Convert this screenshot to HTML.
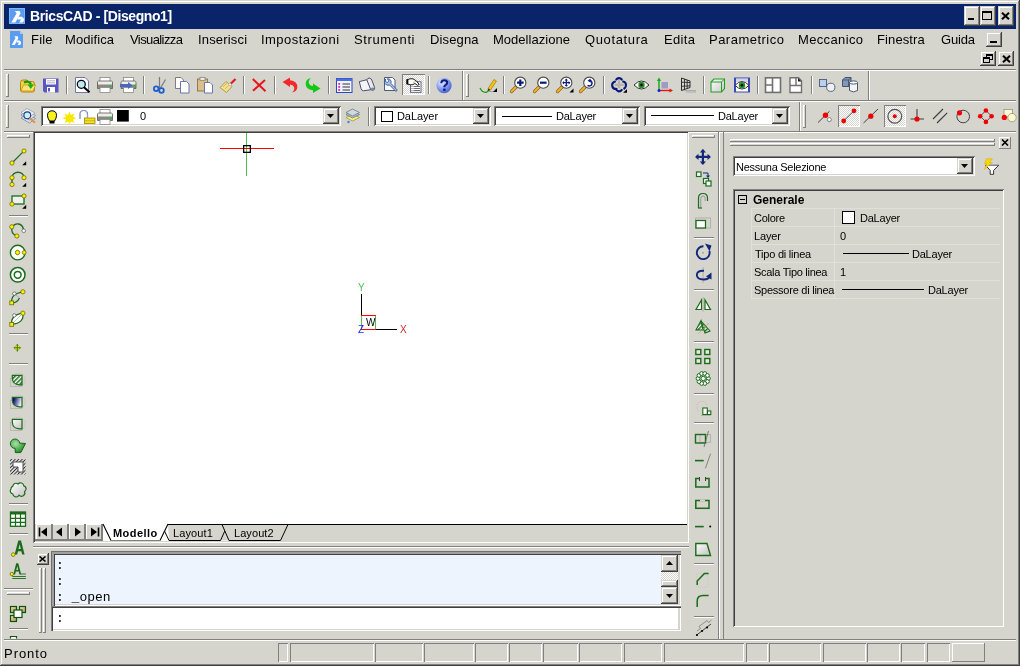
<!DOCTYPE html><html><head><meta charset="utf-8"><style>
html,body{margin:0;padding:0}
body{width:1020px;height:666px;position:relative;overflow:hidden;background:#D5D5CD;font-family:"Liberation Sans",sans-serif}
body>div,body>svg{position:absolute}
</style></head><body>
<div style="left:1px;top:1px;width:1018px;height:1px;background:#FFFFFF"></div>
<div style="left:1px;top:1px;width:1px;height:664px;background:#FFFFFF"></div>
<div style="left:1018px;top:1px;width:1px;height:664px;background:#808080"></div>
<div style="left:1019px;top:0px;width:1px;height:666px;background:#404040"></div>
<div style="left:1px;top:664px;width:1018px;height:1px;background:#808080"></div>
<div style="left:0px;top:665px;width:1020px;height:1px;background:#404040"></div>
<div style="left:4px;top:4px;width:1012px;height:25px;background:#0A246A"></div>
<svg style="left:9px;top:8px;" width="16" height="16" viewBox="0 0 16 16"><rect width="16" height="16" fill="#5A9CF0"/><rect x="0.5" y="0.5" width="15" height="15" fill="none" stroke="#7DB6FA"/><path d="M5.9 3H10.6L11.6 5.2L6.4 14.6H2.3L7.6 5.3Z" fill="#fff"/><path d="M9.5 8.7H13L14.9 10.8V12.9L13.6 14.6H10.2L12.1 11.5H8.4Z" fill="#fff"/></svg>
<div style="left:29.59px;top:8.95px;font:bold 14px/14px 'Liberation Sans';color:#fff;white-space:pre;will-change:transform;letter-spacing:-0.398px;">BricsCAD - [Disegno1]</div>
<div style="left:964px;top:6px;width:16px;height:20px;background:#D5D5CD;box-shadow:inset -1px -1px #404040,inset 1px 1px #D5D5CD,inset -2px -2px #808080,inset 2px 2px #FFFFFF;"></div>
<div style="left:980px;top:6px;width:16px;height:20px;background:#D5D5CD;box-shadow:inset -1px -1px #404040,inset 1px 1px #D5D5CD,inset -2px -2px #808080,inset 2px 2px #FFFFFF;"></div>
<div style="left:998px;top:6px;width:16px;height:20px;background:#D5D5CD;box-shadow:inset -1px -1px #404040,inset 1px 1px #D5D5CD,inset -2px -2px #808080,inset 2px 2px #FFFFFF;"></div>
<div style="left:968px;top:18px;width:6px;height:2px;background:#000"></div>
<div style="left:982px;top:11px;width:10px;height:9px;border:1px solid #000;border-top-width:2px;box-sizing:border-box"></div>
<svg style="left:1001px;top:12px;" width="9" height="8" viewBox="0 0 9 8"><path d="M1 0.8L8 7.2M8 0.8L1 7.2" stroke="#000" stroke-width="2.1"/></svg>
<svg style="left:10px;top:31px;" width="14" height="17" viewBox="0 0 14 17"><path d="M0 0H10L13 3V17H0Z" fill="#5A9CF0"/><path d="M10 0V3H13" fill="#A8CCF8"/><path d="M4.4 5.3H7.7L8.4 6.9L4.7 14H1.8L5.5 7Z" fill="#fff"/><path d="M7.1 9.4H9.6L11 10.9V12.6L10.1 14H7.6L9 11.6H6.4Z" fill="#fff"/></svg>
<div style="left:30.96px;top:32.80px;font:normal 13px/13px 'Liberation Sans';color:#000;white-space:pre;will-change:transform;letter-spacing:0.21px;">File</div>
<div style="left:64.55999999999999px;top:32.80px;font:normal 13px/13px 'Liberation Sans';color:#000;white-space:pre;will-change:transform;letter-spacing:0.079px;">Modifica</div>
<div style="left:130.0px;top:32.80px;font:normal 13px/13px 'Liberation Sans';color:#000;white-space:pre;will-change:transform;letter-spacing:-0.597px;">Visualizza</div>
<div style="left:198.23000000000002px;top:32.80px;font:normal 13px/13px 'Liberation Sans';color:#000;white-space:pre;will-change:transform;letter-spacing:0.171px;">Inserisci</div>
<div style="left:261.33px;top:32.80px;font:normal 13px/13px 'Liberation Sans';color:#000;white-space:pre;will-change:transform;letter-spacing:0.462px;">Impostazioni</div>
<div style="left:354.415px;top:32.80px;font:normal 13px/13px 'Liberation Sans';color:#000;white-space:pre;will-change:transform;letter-spacing:0.607px;">Strumenti</div>
<div style="left:429.65999999999997px;top:32.80px;font:normal 13px/13px 'Liberation Sans';color:#000;white-space:pre;will-change:transform;letter-spacing:0.144px;">Disegna</div>
<div style="left:492.96px;top:32.80px;font:normal 13px/13px 'Liberation Sans';color:#000;white-space:pre;will-change:transform;letter-spacing:0.026px;">Modellazione</div>
<div style="left:585.415px;top:32.80px;font:normal 13px/13px 'Liberation Sans';color:#000;white-space:pre;will-change:transform;letter-spacing:0.629px;">Quotatura</div>
<div style="left:663.96px;top:32.80px;font:normal 13px/13px 'Liberation Sans';color:#000;white-space:pre;will-change:transform;letter-spacing:0.334px;">Edita</div>
<div style="left:708.96px;top:32.80px;font:normal 13px/13px 'Liberation Sans';color:#000;white-space:pre;will-change:transform;letter-spacing:0.479px;">Parametrico</div>
<div style="left:798.26px;top:32.80px;font:normal 13px/13px 'Liberation Sans';color:#000;white-space:pre;will-change:transform;letter-spacing:0.353px;">Meccanico</div>
<div style="left:877.26px;top:32.80px;font:normal 13px/13px 'Liberation Sans';color:#000;white-space:pre;will-change:transform;letter-spacing:0.106px;">Finestra</div>
<div style="left:941.0500000000001px;top:32.80px;font:normal 13px/13px 'Liberation Sans';color:#000;white-space:pre;will-change:transform;letter-spacing:-0.19px;">Guida</div>
<div style="left:986px;top:32px;width:16px;height:15px;background:#D5D5CD;box-shadow:inset -1px -1px #404040,inset 1px 1px #D5D5CD,inset -2px -2px #808080,inset 2px 2px #FFFFFF;"></div>
<div style="left:990px;top:41px;width:7px;height:2px;background:#000"></div>
<div style="left:980px;top:51px;width:16px;height:15px;background:#D5D5CD;box-shadow:inset -1px -1px #404040,inset 1px 1px #D5D5CD,inset -2px -2px #808080,inset 2px 2px #FFFFFF;"></div>
<div style="left:998px;top:51px;width:16px;height:15px;background:#D5D5CD;box-shadow:inset -1px -1px #404040,inset 1px 1px #D5D5CD,inset -2px -2px #808080,inset 2px 2px #FFFFFF;"></div>
<svg style="left:983px;top:54px;" width="10" height="9" viewBox="0 0 10 9"><rect x="3.5" y="0.5" width="6" height="5" fill="none" stroke="#000"/><rect x="3" y="0" width="7" height="2" fill="#000"/><rect x="0.5" y="3.5" width="6" height="5" fill="#D5D5CD" stroke="#000"/><rect x="0" y="3" width="7" height="2" fill="#000"/></svg>
<svg style="left:1002px;top:55px;" width="9" height="8" viewBox="0 0 9 8"><path d="M1 0.8L8 7.2M8 0.8L1 7.2" stroke="#000" stroke-width="2.1"/></svg>
<div style="left:4px;top:69px;width:1012px;height:1px;background:#808080"></div>
<div style="left:4px;top:70px;width:1012px;height:1px;background:#FFFFFF"></div>
<div style="left:4px;top:100px;width:1012px;height:1px;background:#808080"></div>
<div style="left:4px;top:101px;width:1012px;height:1px;background:#FFFFFF"></div>
<div style="left:4px;top:131px;width:1012px;height:1px;background:#808080"></div>
<div style="left:4px;top:132px;width:1012px;height:1px;background:#FFFFFF"></div>
<div style="left:6px;top:74px;width:3px;height:23px;box-shadow:inset -1px -1px #808080,inset 1px 1px #FFFFFF"></div>
<div style="left:66px;top:76px;width:1px;height:18px;background:#808080"></div>
<div style="left:67px;top:76px;width:1px;height:18px;background:#FFFFFF"></div>
<div style="left:143px;top:76px;width:1px;height:18px;background:#808080"></div>
<div style="left:144px;top:76px;width:1px;height:18px;background:#FFFFFF"></div>
<div style="left:243px;top:76px;width:1px;height:18px;background:#808080"></div>
<div style="left:244px;top:76px;width:1px;height:18px;background:#FFFFFF"></div>
<div style="left:274px;top:76px;width:1px;height:18px;background:#808080"></div>
<div style="left:275px;top:76px;width:1px;height:18px;background:#FFFFFF"></div>
<div style="left:328px;top:76px;width:1px;height:18px;background:#808080"></div>
<div style="left:329px;top:76px;width:1px;height:18px;background:#FFFFFF"></div>
<div style="left:428px;top:76px;width:1px;height:18px;background:#808080"></div>
<div style="left:429px;top:76px;width:1px;height:18px;background:#FFFFFF"></div>
<div style="left:462px;top:71px;width:1px;height:29px;background:#808080"></div>
<div style="left:463px;top:71px;width:1px;height:29px;background:#FFFFFF"></div>
<div style="left:466px;top:74px;width:3px;height:23px;box-shadow:inset -1px -1px #808080,inset 1px 1px #FFFFFF"></div>
<div style="left:503px;top:76px;width:1px;height:18px;background:#808080"></div>
<div style="left:504px;top:76px;width:1px;height:18px;background:#FFFFFF"></div>
<div style="left:603px;top:76px;width:1px;height:18px;background:#808080"></div>
<div style="left:604px;top:76px;width:1px;height:18px;background:#FFFFFF"></div>
<div style="left:703px;top:76px;width:1px;height:18px;background:#808080"></div>
<div style="left:704px;top:76px;width:1px;height:18px;background:#FFFFFF"></div>
<div style="left:757px;top:76px;width:1px;height:18px;background:#808080"></div>
<div style="left:758px;top:76px;width:1px;height:18px;background:#FFFFFF"></div>
<div style="left:811px;top:76px;width:1px;height:18px;background:#808080"></div>
<div style="left:812px;top:76px;width:1px;height:18px;background:#FFFFFF"></div>
<div style="left:868px;top:71px;width:1px;height:29px;background:#808080"></div>
<div style="left:869px;top:71px;width:1px;height:29px;background:#FFFFFF"></div>
<div style="left:6px;top:105px;width:3px;height:23px;box-shadow:inset -1px -1px #808080,inset 1px 1px #FFFFFF"></div>
<div style="left:368px;top:107px;width:1px;height:19px;background:#808080"></div>
<div style="left:369px;top:107px;width:1px;height:19px;background:#FFFFFF"></div>
<div style="left:799px;top:102px;width:1px;height:29px;background:#808080"></div>
<div style="left:800px;top:102px;width:1px;height:29px;background:#FFFFFF"></div>
<div style="left:803px;top:105px;width:3px;height:23px;box-shadow:inset -1px -1px #808080,inset 1px 1px #FFFFFF"></div>
<div style="left:41px;top:106px;width:300px;height:20px;background:#fff;box-shadow:inset 1px 1px #808080,inset -1px -1px #FFFFFF,inset 2px 2px #404040,inset -2px -2px #D5D5CD;"></div>
<div style="left:323px;top:108px;width:16px;height:16px;background:#D5D5CD;box-shadow:inset -1px -1px #404040,inset 1px 1px #D5D5CD,inset -2px -2px #808080,inset 2px 2px #FFFFFF;"></div>
<svg style="left:327px;top:114px;" width="7" height="4" viewBox="0 0 7 4"><path d="M0 0H7L3.5 4Z" fill="#000"/></svg>
<div style="left:374px;top:106px;width:117px;height:20px;background:#fff;box-shadow:inset 1px 1px #808080,inset -1px -1px #FFFFFF,inset 2px 2px #404040,inset -2px -2px #D5D5CD;"></div>
<div style="left:473px;top:108px;width:16px;height:16px;background:#D5D5CD;box-shadow:inset -1px -1px #404040,inset 1px 1px #D5D5CD,inset -2px -2px #808080,inset 2px 2px #FFFFFF;"></div>
<svg style="left:477px;top:114px;" width="7" height="4" viewBox="0 0 7 4"><path d="M0 0H7L3.5 4Z" fill="#000"/></svg>
<div style="left:494px;top:106px;width:146px;height:20px;background:#fff;box-shadow:inset 1px 1px #808080,inset -1px -1px #FFFFFF,inset 2px 2px #404040,inset -2px -2px #D5D5CD;"></div>
<div style="left:622px;top:108px;width:16px;height:16px;background:#D5D5CD;box-shadow:inset -1px -1px #404040,inset 1px 1px #D5D5CD,inset -2px -2px #808080,inset 2px 2px #FFFFFF;"></div>
<svg style="left:626px;top:114px;" width="7" height="4" viewBox="0 0 7 4"><path d="M0 0H7L3.5 4Z" fill="#000"/></svg>
<div style="left:644px;top:106px;width:146px;height:20px;background:#fff;box-shadow:inset 1px 1px #808080,inset -1px -1px #FFFFFF,inset 2px 2px #404040,inset -2px -2px #D5D5CD;"></div>
<div style="left:772px;top:108px;width:16px;height:16px;background:#D5D5CD;box-shadow:inset -1px -1px #404040,inset 1px 1px #D5D5CD,inset -2px -2px #808080,inset 2px 2px #FFFFFF;"></div>
<svg style="left:776px;top:114px;" width="7" height="4" viewBox="0 0 7 4"><path d="M0 0H7L3.5 4Z" fill="#000"/></svg>
<div style="left:139.615px;top:111.19px;font:normal 11px/11px 'Liberation Sans';color:#000;white-space:pre;will-change:transform;">0</div>
<div style="left:381px;top:111px;width:12px;height:11px;border:1px solid #000;box-sizing:border-box;background:#fff"></div>
<div style="left:397.12px;top:111.19px;font:normal 11px/11px 'Liberation Sans';color:#000;white-space:pre;will-change:transform;letter-spacing:-0.089px;">DaLayer</div>
<div style="left:502px;top:116px;width:50px;height:1px;background:#000"></div>
<div style="left:555.82px;top:111.19px;font:normal 11px/11px 'Liberation Sans';color:#000;white-space:pre;will-change:transform;letter-spacing:-0.222px;">DaLayer</div>
<div style="left:651px;top:115px;width:63px;height:1px;background:#000"></div>
<div style="left:717.52px;top:111.19px;font:normal 11px/11px 'Liberation Sans';color:#000;white-space:pre;will-change:transform;letter-spacing:-0.222px;">DaLayer</div>
<div style="left:402px;top:74px;width:23px;height:21px;background-color:#fff;background-image:linear-gradient(45deg,#D5D5CD 25%,transparent 25%,transparent 75%,#D5D5CD 75%),linear-gradient(45deg,#D5D5CD 25%,transparent 25%,transparent 75%,#D5D5CD 75%);background-size:2px 2px;background-position:0 0,1px 1px;box-shadow:inset 1px 1px #808080,inset -1px -1px #FFFFFF"></div>
<div style="left:838px;top:105px;width:22px;height:22px;background-color:#fff;background-image:linear-gradient(45deg,#D5D5CD 25%,transparent 25%,transparent 75%,#D5D5CD 75%),linear-gradient(45deg,#D5D5CD 25%,transparent 25%,transparent 75%,#D5D5CD 75%);background-size:2px 2px;background-position:0 0,1px 1px;box-shadow:inset 1px 1px #808080,inset -1px -1px #FFFFFF"></div>
<div style="left:884px;top:105px;width:22px;height:22px;background-color:#fff;background-image:linear-gradient(45deg,#D5D5CD 25%,transparent 25%,transparent 75%,#D5D5CD 75%),linear-gradient(45deg,#D5D5CD 25%,transparent 25%,transparent 75%,#D5D5CD 75%);background-size:2px 2px;background-position:0 0,1px 1px;box-shadow:inset 1px 1px #808080,inset -1px -1px #FFFFFF"></div>
<div style="left:4px;top:132px;width:29px;height:1px;background:#FFFFFF"></div>
<div style="left:7px;top:135px;width:23px;height:3px;box-shadow:inset -1px -1px #808080,inset 1px 1px #FFFFFF"></div>
<div style="left:9px;top:215px;width:19px;height:1px;background:#808080"></div>
<div style="left:9px;top:216px;width:19px;height:1px;background:#FFFFFF"></div>
<div style="left:9px;top:333px;width:19px;height:1px;background:#808080"></div>
<div style="left:9px;top:334px;width:19px;height:1px;background:#FFFFFF"></div>
<div style="left:9px;top:363px;width:19px;height:1px;background:#808080"></div>
<div style="left:9px;top:364px;width:19px;height:1px;background:#FFFFFF"></div>
<div style="left:9px;top:503px;width:19px;height:1px;background:#808080"></div>
<div style="left:9px;top:504px;width:19px;height:1px;background:#FFFFFF"></div>
<div style="left:9px;top:533px;width:19px;height:1px;background:#808080"></div>
<div style="left:9px;top:534px;width:19px;height:1px;background:#FFFFFF"></div>
<div style="left:4px;top:588px;width:29px;height:1px;background:#808080"></div>
<div style="left:4px;top:589px;width:29px;height:1px;background:#FFFFFF"></div>
<div style="left:7px;top:592px;width:23px;height:3px;box-shadow:inset -1px -1px #808080,inset 1px 1px #FFFFFF"></div>
<div style="left:9px;top:628px;width:19px;height:1px;background:#808080"></div>
<div style="left:9px;top:629px;width:19px;height:1px;background:#FFFFFF"></div>
<div style="left:33px;top:131px;width:656px;height:412px;background:#fff;box-shadow:inset 1px 1px #808080,inset -1px -1px #FFFFFF,inset 2px 2px #404040,inset -2px -2px #D5D5CD"></div>
<div style="left:246px;top:133px;width:1px;height:43px;background:#4CC24C"></div>
<div style="left:220px;top:148px;width:54px;height:1px;background:#FF0000"></div>
<svg style="left:240px;top:142px;" width="14" height="14" viewBox="0 0 14 14"><rect x="3.65" y="3.65" width="6.7" height="6.7" fill="none" stroke="#000" stroke-width="1.3"/></svg>
<div style="left:361px;top:294px;width:1px;height:22px;background:#000"></div>
<div style="left:361px;top:315px;width:15px;height:1px;background:#FF0000"></div>
<div style="left:361px;top:316px;width:1px;height:13px;background:#4CC24C"></div>
<div style="left:375px;top:316px;width:1px;height:13px;background:#4CC24C"></div>
<div style="left:361px;top:329px;width:15px;height:1px;background:#FF0000"></div>
<div style="left:376px;top:329px;width:21px;height:1px;background:#000"></div>
<div style="left:357.5px;top:282.54px;font:normal 10px/10px 'Liberation Sans';color:#4CC24C;white-space:pre;will-change:transform;">Y</div>
<div style="left:365.5px;top:317.54px;font:normal 10px/10px 'Liberation Sans';color:#000;white-space:pre;will-change:transform;">W</div>
<div style="left:357.5px;top:324.54px;font:normal 10px/10px 'Liberation Sans';color:#2020FF;white-space:pre;will-change:transform;">Z</div>
<div style="left:399.5px;top:324.54px;font:normal 10px/10px 'Liberation Sans';color:#C03030;white-space:pre;will-change:transform;">X</div>
<div style="left:35px;top:524px;width:68px;height:17px;background:#D5D5CD"></div>
<div style="left:36px;top:524px;width:15px;height:15px;background:#D5D5CD;box-shadow:inset 1px 1px #FFFFFF"></div>
<div style="left:52px;top:524px;width:15px;height:15px;background:#D5D5CD;box-shadow:inset 1px 1px #FFFFFF"></div>
<div style="left:69px;top:524px;width:15px;height:15px;background:#D5D5CD;box-shadow:inset 1px 1px #FFFFFF"></div>
<div style="left:86px;top:524px;width:15px;height:15px;background:#D5D5CD;box-shadow:inset 1px 1px #FFFFFF"></div>
<div style="left:51px;top:524px;width:2px;height:15px;background:#808080"></div>
<div style="left:67px;top:524px;width:2px;height:15px;background:#808080"></div>
<div style="left:84px;top:524px;width:2px;height:15px;background:#808080"></div>
<div style="left:101px;top:524px;width:2px;height:15px;background:#808080"></div>
<div style="left:35px;top:539px;width:68px;height:2px;background:#808080"></div>
<svg style="left:100px;top:524px;" width="190" height="18" viewBox="0 0 190 18"></svg>
<div style="left:33px;top:546px;width:656px;height:1px;background:#808080"></div>
<div style="left:33px;top:547px;width:656px;height:1px;background:#FFFFFF"></div>
<div style="left:37px;top:553px;width:12px;height:12px;background:#D5D5CD;box-shadow:inset -1px -1px #404040,inset 1px 1px #D5D5CD,inset -2px -2px #808080,inset 2px 2px #FFFFFF;"></div>
<svg style="left:39px;top:556px;" width="7" height="6" viewBox="0 0 7 6"><path d="M0.5 0.5L6.5 5.5M6.5 0.5L0.5 5.5" stroke="#000" stroke-width="1.6"/></svg>
<div style="left:39px;top:568px;width:3px;height:65px;box-shadow:inset -1px -1px #808080,inset 1px 1px #FFFFFF"></div>
<div style="left:43px;top:568px;width:3px;height:65px;box-shadow:inset -1px -1px #808080,inset 1px 1px #FFFFFF"></div>
<div style="left:51px;top:551px;width:630px;height:55px;background:#EDF4FE;box-shadow:inset 1px 1px #707070,inset 2px 2px #A0A0A0,inset 3px 3px #A0A0A0,inset 4px 4px #404040,inset -1px -1px #FFFFFF,inset -3px -2px #D5D5CD"></div>
<div style="left:51px;top:606px;width:630px;height:25px;background:#fff;box-shadow:inset 1px 1px #808080,inset 2px 2px #404040,inset -1px -1px #FFFFFF,inset -3px -2px #D5D5CD"></div>
<div style="left:55.5px;top:559.04px;font:normal 13px/13px 'Liberation Mono';color:#000;white-space:pre;will-change:transform;">: </div>
<div style="left:55.5px;top:575.04px;font:normal 13px/13px 'Liberation Mono';color:#000;white-space:pre;will-change:transform;">:</div>
<div style="left:55.5px;top:591.04px;font:normal 13px/13px 'Liberation Mono';color:#000;white-space:pre;will-change:transform;">: _open</div>
<div style="left:55.5px;top:612.04px;font:normal 13px/13px 'Liberation Mono';color:#000;white-space:pre;will-change:transform;">:</div>
<div style="left:661px;top:555px;width:17px;height:17px;background:#D5D5CD;box-shadow:inset -1px -1px #404040,inset 1px 1px #D5D5CD,inset -2px -2px #808080,inset 2px 2px #FFFFFF;"></div>
<svg style="left:666px;top:561px;" width="7" height="4" viewBox="0 0 7 4"><path d="M3.5 0L7 4H0Z" fill="#000"/></svg>
<div style="left:661px;top:572px;width:17px;height:8px;background-color:#fff;background-image:linear-gradient(45deg,#D5D5CD 25%,transparent 25%,transparent 75%,#D5D5CD 75%),linear-gradient(45deg,#D5D5CD 25%,transparent 25%,transparent 75%,#D5D5CD 75%);background-size:2px 2px;background-position:0 0,1px 1px"></div>
<div style="left:661px;top:580px;width:17px;height:7px;background:#D5D5CD;box-shadow:inset -1px -1px #404040,inset 1px 1px #D5D5CD,inset -2px -2px #808080,inset 2px 2px #FFFFFF;"></div>
<div style="left:661px;top:587px;width:17px;height:17px;background:#D5D5CD;box-shadow:inset -1px -1px #404040,inset 1px 1px #D5D5CD,inset -2px -2px #808080,inset 2px 2px #FFFFFF;"></div>
<svg style="left:666px;top:594px;" width="7" height="4" viewBox="0 0 7 4"><path d="M0 0H7L3.5 4Z" fill="#000"/></svg>
<div style="left:692px;top:135px;width:23px;height:3px;box-shadow:inset -1px -1px #808080,inset 1px 1px #FFFFFF"></div>
<div style="left:718px;top:132px;width:1px;height:507px;background:#808080"></div>
<div style="left:719px;top:132px;width:1px;height:507px;background:#FFFFFF"></div>
<div style="left:723px;top:132px;width:1px;height:507px;background:#808080"></div>
<div style="left:694px;top:237px;width:20px;height:1px;background:#808080"></div>
<div style="left:694px;top:238px;width:20px;height:1px;background:#FFFFFF"></div>
<div style="left:694px;top:289px;width:20px;height:1px;background:#808080"></div>
<div style="left:694px;top:290px;width:20px;height:1px;background:#FFFFFF"></div>
<div style="left:694px;top:341px;width:20px;height:1px;background:#808080"></div>
<div style="left:694px;top:342px;width:20px;height:1px;background:#FFFFFF"></div>
<div style="left:694px;top:393px;width:20px;height:1px;background:#808080"></div>
<div style="left:694px;top:394px;width:20px;height:1px;background:#FFFFFF"></div>
<div style="left:694px;top:422px;width:20px;height:1px;background:#808080"></div>
<div style="left:694px;top:423px;width:20px;height:1px;background:#FFFFFF"></div>
<div style="left:694px;top:563px;width:20px;height:1px;background:#808080"></div>
<div style="left:694px;top:564px;width:20px;height:1px;background:#FFFFFF"></div>
<div style="left:694px;top:616px;width:20px;height:1px;background:#808080"></div>
<div style="left:694px;top:617px;width:20px;height:1px;background:#FFFFFF"></div>
<div style="left:730px;top:139px;width:265px;height:3px;box-shadow:inset -1px -1px #808080,inset 1px 1px #FFFFFF"></div>
<div style="left:730px;top:143px;width:265px;height:3px;box-shadow:inset -1px -1px #808080,inset 1px 1px #FFFFFF"></div>
<div style="left:999px;top:137px;width:12px;height:12px;background:#D5D5CD;box-shadow:inset -1px -1px #808080,inset 1px 1px #FFFFFF;"></div>
<svg style="left:1001px;top:139px;" width="8" height="7" viewBox="0 0 8 7"><path d="M1 0.5L7 6.5M7 0.5L1 6.5" stroke="#000" stroke-width="1.6"/></svg>
<div style="left:733px;top:156px;width:242px;height:20px;background:#fff;box-shadow:inset 1px 1px #808080,inset -1px -1px #FFFFFF,inset 2px 2px #404040,inset -2px -2px #D5D5CD;"></div>
<div style="left:957px;top:158px;width:16px;height:16px;background:#D5D5CD;box-shadow:inset -1px -1px #404040,inset 1px 1px #D5D5CD,inset -2px -2px #808080,inset 2px 2px #FFFFFF;"></div>
<svg style="left:961px;top:164px;" width="7" height="4" viewBox="0 0 7 4"><path d="M0 0H7L3.5 4Z" fill="#000"/></svg>
<div style="left:735.52px;top:161.69px;font:normal 11px/11px 'Liberation Sans';color:#000;white-space:pre;will-change:transform;letter-spacing:-0.278px;">Nessuna Selezione</div>
<div style="left:733px;top:189px;width:271px;height:438px;box-shadow:inset 1px 1px #808080,inset -1px -1px #FFFFFF,inset 2px 2px #404040,inset -2px -2px #D5D5CD"></div>
<div style="left:738px;top:195px;width:9px;height:9px;border:1px solid #000;box-sizing:border-box"></div>
<div style="left:740px;top:199px;width:5px;height:1px;background:#000"></div>
<div style="left:752.92px;top:194.34px;font:bold 12px/12px 'Liberation Sans';color:#000;white-space:pre;will-change:transform;letter-spacing:-0.003px;">Generale</div>
<div style="left:751px;top:208px;width:249px;height:1px;background:#E0DFD8"></div>
<div style="left:751px;top:226px;width:249px;height:1px;background:#E0DFD8"></div>
<div style="left:751px;top:244px;width:249px;height:1px;background:#E0DFD8"></div>
<div style="left:751px;top:262px;width:249px;height:1px;background:#E0DFD8"></div>
<div style="left:751px;top:280px;width:249px;height:1px;background:#E0DFD8"></div>
<div style="left:751px;top:298px;width:249px;height:1px;background:#E0DFD8"></div>
<div style="left:751px;top:208px;width:1px;height:91px;background:#E0DFD8"></div>
<div style="left:834px;top:208px;width:1px;height:91px;background:#E0DFD8"></div>
<div style="left:754.35px;top:212.69px;font:normal 11px/11px 'Liberation Sans';color:#000;white-space:pre;will-change:transform;letter-spacing:-0.281px;">Colore</div>
<div style="left:754.02px;top:230.69px;font:normal 11px/11px 'Liberation Sans';color:#000;white-space:pre;will-change:transform;letter-spacing:-0.128px;">Layer</div>
<div style="left:754.68px;top:248.69px;font:normal 11px/11px 'Liberation Sans';color:#000;white-space:pre;will-change:transform;letter-spacing:-0.228px;">Tipo di linea</div>
<div style="left:754.405px;top:266.69px;font:normal 11px/11px 'Liberation Sans';color:#000;white-space:pre;will-change:transform;letter-spacing:-0.281px;">Scala Tipo linea</div>
<div style="left:754.405px;top:284.69px;font:normal 11px/11px 'Liberation Sans';color:#000;white-space:pre;will-change:transform;letter-spacing:-0.246px;">Spessore di linea</div>
<div style="left:842px;top:211px;width:13px;height:13px;border:1px solid #000;box-sizing:border-box;background:#fff"></div>
<div style="left:859.72px;top:212.69px;font:normal 11px/11px 'Liberation Sans';color:#000;white-space:pre;will-change:transform;letter-spacing:-0.222px;">DaLayer</div>
<div style="left:839.5px;top:230.69px;font:normal 11px/11px 'Liberation Sans';color:#000;white-space:pre;will-change:transform;">0</div>
<div style="left:843px;top:253px;width:66px;height:1px;background:#000"></div>
<div style="left:912.12px;top:248.69px;font:normal 11px/11px 'Liberation Sans';color:#000;white-space:pre;will-change:transform;letter-spacing:-0.222px;">DaLayer</div>
<div style="left:840px;top:266.69px;font:normal 11px/11px 'Liberation Sans';color:#000;white-space:pre;will-change:transform;">1</div>
<div style="left:842px;top:289px;width:82px;height:1px;background:#000"></div>
<div style="left:927.92px;top:284.69px;font:normal 11px/11px 'Liberation Sans';color:#000;white-space:pre;will-change:transform;letter-spacing:-0.222px;">DaLayer</div>
<div style="left:4px;top:639px;width:1012px;height:1px;background:#808080"></div>
<div style="left:4px;top:640px;width:1012px;height:1px;background:#FFFFFF"></div>
<div style="left:4.46px;top:646.60px;font:normal 13px/13px 'Liberation Sans';color:#000;white-space:pre;will-change:transform;letter-spacing:0.955px;">Pronto</div>
<div style="left:278px;top:643px;width:10px;height:19px;box-shadow:inset 1px 1px #808080,inset -1px -1px #FFFFFF;"></div>
<div style="left:290px;top:643px;width:84px;height:19px;box-shadow:inset 1px 1px #808080,inset -1px -1px #FFFFFF;"></div>
<div style="left:375px;top:643px;width:48px;height:19px;box-shadow:inset 1px 1px #808080,inset -1px -1px #FFFFFF;"></div>
<div style="left:424px;top:643px;width:50px;height:19px;box-shadow:inset 1px 1px #808080,inset -1px -1px #FFFFFF;"></div>
<div style="left:475px;top:643px;width:33px;height:19px;box-shadow:inset 1px 1px #808080,inset -1px -1px #FFFFFF;"></div>
<div style="left:509px;top:643px;width:33px;height:19px;box-shadow:inset 1px 1px #808080,inset -1px -1px #FFFFFF;"></div>
<div style="left:543px;top:643px;width:35px;height:19px;box-shadow:inset 1px 1px #808080,inset -1px -1px #FFFFFF;"></div>
<div style="left:579px;top:643px;width:43px;height:19px;box-shadow:inset 1px 1px #808080,inset -1px -1px #FFFFFF;"></div>
<div style="left:624px;top:643px;width:38px;height:19px;box-shadow:inset 1px 1px #808080,inset -1px -1px #FFFFFF;"></div>
<div style="left:664px;top:643px;width:80px;height:19px;box-shadow:inset 1px 1px #808080,inset -1px -1px #FFFFFF;"></div>
<div style="left:746px;top:643px;width:22px;height:19px;box-shadow:inset 1px 1px #808080,inset -1px -1px #FFFFFF;"></div>
<div style="left:769px;top:643px;width:52px;height:19px;box-shadow:inset 1px 1px #808080,inset -1px -1px #FFFFFF;"></div>
<div style="left:823px;top:643px;width:43px;height:19px;box-shadow:inset 1px 1px #808080,inset -1px -1px #FFFFFF;"></div>
<div style="left:867px;top:643px;width:33px;height:19px;box-shadow:inset 1px 1px #808080,inset -1px -1px #FFFFFF;"></div>
<div style="left:901px;top:643px;width:24px;height:19px;box-shadow:inset 1px 1px #808080,inset -1px -1px #FFFFFF;"></div>
<div style="left:927px;top:643px;width:23px;height:19px;box-shadow:inset 1px 1px #808080,inset -1px -1px #FFFFFF;"></div>
<div style="left:952px;top:643px;width:33px;height:19px;background:#D5D5CD;box-shadow:inset -1px -1px #808080,inset 1px 1px #FFFFFF;background:none"></div>
<svg style="left:0;top:0;position:absolute" width="1020" height="666" viewBox="0 0 1020 666"><path d="M20.5 82.5Q20.5 80 23 80H27L28.5 81.5H32.5Q34.5 81.5 34.5 83.5V90Q34.5 92 32.5 92H22.5Q20.5 92 20.5 90Z" fill="#F2CF4A" stroke="#B8860B" stroke-width="1"/><path d="M21 91L23.5 85H35.5L33 91Z" fill="#FBE57A" stroke="#C8960B" stroke-width="0.8"/><path d="M24 82.5Q29 80 31 84.5" fill="none" stroke="#119A11" stroke-width="2.2"/><path d="M27.5 84.5H34L30.8 89Z" fill="#18B018"/><path d="M43 78.5H58.5V92.5H44.5L43 91Z" fill="#5858C0"/><rect x="46" y="79" width="10" height="5.5" fill="#fff"/><path d="M47 80.8H55M47 82.8H55" stroke="#A0A0B8" stroke-width="0.8"/><rect x="47" y="87" width="8" height="5.5" fill="#fff"/><rect x="48" y="88" width="2" height="3.5" fill="#5858C0"/><path d="M75.5 77.5H85L88.5 81V92.5H75.5Z" fill="#fff" stroke="#7078A8" stroke-width="1"/><circle cx="81.3" cy="84.3" r="4" fill="#BDEBF5" stroke="#000" stroke-width="1.2"/><path d="M84 87.2L89.5 92.2" stroke="#000" stroke-width="2"/><rect x="100" y="77.5" width="10" height="4" fill="#fff" stroke="#888" stroke-width="0.8"/><path d="M97.5 82.5Q97.5 81.0 99 81.0H111Q112.5 81.0 112.5 82.5V88.5H97.5Z" fill="#8A8A80" stroke="#5A5A50" stroke-width="0.8"/><rect x="98" y="81.5" width="14" height="3" fill="#EDEDED"/><rect x="110" y="85.0" width="2" height="1.5" fill="#11CC33"/><rect x="100" y="87.5" width="10" height="5" fill="#fff" stroke="#888" stroke-width="0.8"/><rect x="123.5" y="77.5" width="10" height="4" fill="#fff" stroke="#888" stroke-width="0.8"/><path d="M121.0 82.5Q121.0 81.0 122.5 81.0H134.5Q136.0 81.0 136.0 82.5V88.5H121.0Z" fill="#8A8A80" stroke="#5A5A50" stroke-width="0.8"/><rect x="121.5" y="81.5" width="14" height="3" fill="#EDEDED"/><rect x="133.5" y="85.0" width="2" height="1.5" fill="#11CC33"/><rect x="123.5" y="87.5" width="10" height="5" fill="#fff" stroke="#888" stroke-width="0.8"/><path d="M120 84H128V82L132.5 85.5L128 89V87H120Z" fill="#4A64C8"/><path d="M159.5 77V88M165.5 79.5L160.5 88" stroke="#7A7A7A" stroke-width="1.2"/><circle cx="156.2" cy="88.7" r="2.3" fill="none" stroke="#1E5FD0" stroke-width="1.8"/><circle cx="161.5" cy="90.5" r="2.3" fill="none" stroke="#1E5FD0" stroke-width="1.8"/><path d="M175.5 77.5H181L183.5 80V88.5H175.5Z" fill="#fff" stroke="#707070" stroke-width="0.9"/><path d="M180.5 81.5H186.5L189 84V93H180.5Z" fill="#fff" stroke="#6068A8" stroke-width="0.9"/><rect x="197.5" y="79" width="10" height="12" fill="#D8C088" stroke="#8A7440" stroke-width="0.9"/><rect x="200" y="77.3" width="5" height="3" fill="#eee" stroke="#777" stroke-width="0.7"/><path d="M204.5 82.5H210L212.5 85V93H204.5Z" fill="#fff" stroke="#6068A8" stroke-width="0.9"/><path d="M220 87.5L226 81.5L232 86.5L226.5 92.5Z" fill="#F4E08C" stroke="#9A8A40" stroke-width="0.8"/><path d="M223 87L227 83M225 89L229 85" stroke="#C0A850" stroke-width="0.7"/><path d="M230.5 84L235.5 79" stroke="#E01818" stroke-width="2.2"/><circle cx="230" cy="84.5" r="1.3" fill="#fff" stroke="#999" stroke-width="0.5"/><path d="M252.8 79L265.5 91.2M265 80L253 90.8" stroke="#E8141E" stroke-width="2"/><path d="M282.5 82L290 77.5V80.2Q297.8 81 297.3 87.5Q297 91.5 292 92.5Q295 90 294 87Q293 84.5 290 84.5V87Z" fill="#F42828"/><path d="M282.5 82L290 77.5V80.2Q297.8 81 297.3 87.5Q297 91.5 292 92.5Q295 90 294 87Q293 84.5 290 84.5V87Z" fill="#14C814" transform="translate(23 0.4) rotate(180 290 85)"/><rect x="336.5" y="78.5" width="15.5" height="14" fill="#F0F4FF" stroke="#2A48C0" stroke-width="1"/><rect x="336.5" y="78.5" width="15.5" height="2.5" fill="#4A70E0"/><rect x="338.3" y="83" width="1.8" height="1.8" fill="#E020C0"/><path d="M342.5 84H350" stroke="#333" stroke-width="1"/><rect x="338.3" y="86" width="1.8" height="1.8" fill="#E020C0"/><path d="M342.5 87H350" stroke="#333" stroke-width="1"/><rect x="338.3" y="89" width="1.8" height="1.8" fill="#E020C0"/><path d="M342.5 90H350" stroke="#333" stroke-width="1"/><path d="M359.3 81.6L367.5 79.6L371.5 89.6L363.5 90.8Q361.5 90.5 361 88.5Z" fill="#F4F4F8" stroke="#3A4058" stroke-width="0.9"/><path d="M366.8 79.8Q367.5 77.8 369.8 78.2Q371 78.5 371.8 80L374.6 87.6Q375 90 372.8 90.3Q371 90.5 370.3 88.6Z" fill="#E8EAF0" stroke="#3A4058" stroke-width="0.9"/><ellipse cx="372.6" cy="88.8" rx="1.8" ry="1.4" fill="#7A88A8"/><path d="M384.5 77.5H392.5L395 80V90.5H384.5Z" fill="#fff" stroke="#404870" stroke-width="0.9"/><path d="M385.5 79.2A3.3 3.3 0 0 0 385.8 84.5Q387.5 85.8 389.5 85L396 91.5L397.3 90L391 83.5Q391.8 81 390 79.5Q388.8 78.5 387.3 78.7L388.8 80.8L387.5 82.5L385.5 81.5Z" fill="#A8C0E8" stroke="#2A4A90" stroke-width="0.8"/><rect x="410.5" y="81.8" width="10.5" height="10.5" fill="#fff" stroke="#505A80" stroke-width="0.9"/><path d="M413.5 86.5H420M413.5 88.5H420M413.5 90.5H420" stroke="#333" stroke-width="0.7"/><path d="M411.5 86.5H412.5M411.5 88.5H412.5M411.5 90.5H412.5" stroke="#333" stroke-width="0.7"/><path d="M407.8 79.5Q410 78.5 413 78.8L416.5 81L419.2 84.5L417.5 85.3L415 83.5Q413 85 410.5 84.8L407.8 84.2Z" fill="#fff" stroke="#000" stroke-width="0.9"/><rect x="406.3" y="79.2" width="1.8" height="5.2" fill="#000"/><path d="M413 82.5L416 81.5" stroke="#A09050" stroke-width="0.6"/><defs><radialGradient id="hg" cx="0.35" cy="0.3" r="0.75"><stop offset="0" stop-color="#E8EEFF"/><stop offset="0.6" stop-color="#7C94F0"/><stop offset="1" stop-color="#4A5CC8"/></radialGradient></defs><circle cx="444" cy="85.6" r="7.6" fill="url(#hg)"/><path d="M441.3 83.2Q441.3 80.3 444.3 80.3Q447.2 80.3 447.2 82.8Q447.2 84.3 445.5 85.2Q444.3 85.8 444.3 87.2" fill="none" stroke="#0A1A7A" stroke-width="2"/><rect x="443.2" y="88.6" width="2.3" height="2.3" fill="#0A1A7A"/><path d="M480 88Q482 92.5 486 92.3Q488 92 489.5 89.5" fill="none" stroke="#119A11" stroke-width="1.2"/><path d="M489 91.5H496" stroke="#A0A0A0" stroke-width="1"/><path d="M488 88.5L494 79.5L496.5 81L490.5 90Z" fill="#F4C418" stroke="#A07800" stroke-width="0.7"/><path d="M488 88.5L487.6 91L490.5 90Z" fill="#333"/><path d="M497 92H493L497 88Z" fill="#000"/><path d="M511.5 91.5L516.5 86.5" stroke="#8A6410" stroke-width="3.2" stroke-linecap="round"/><path d="M511.5 91.5L516.5 86.5" stroke="#F4B030" stroke-width="1.8" stroke-linecap="round"/><circle cx="520.3" cy="82.7" r="5.6" fill="#fff" stroke="#4A4A4A" stroke-width="1.1"/><path d="M517 82.7H523.6M520.3 79.4V86" stroke="#0A1A7A" stroke-width="2.2"/><path d="M534.5 91.5L539.5 86.5" stroke="#8A6410" stroke-width="3.2" stroke-linecap="round"/><path d="M534.5 91.5L539.5 86.5" stroke="#F4B030" stroke-width="1.8" stroke-linecap="round"/><circle cx="543.3" cy="82.7" r="5.6" fill="#fff" stroke="#4A4A4A" stroke-width="1.1"/><path d="M540 82.7H546.6" stroke="#0A1A7A" stroke-width="2.2"/><path d="M557.5 91.5L562.5 86.5" stroke="#8A6410" stroke-width="3.2" stroke-linecap="round"/><path d="M557.5 91.5L562.5 86.5" stroke="#F4B030" stroke-width="1.8" stroke-linecap="round"/><circle cx="566.3" cy="82.7" r="5.6" fill="#fff" stroke="#4A4A4A" stroke-width="1.1"/><path d="M563 82.7H569.6M566.3 79.4V86" stroke="#0A1A7A" stroke-width="1.2"/><path d="M566.3 78.6L564.6 80.4H568ZM566.3 86.8L564.6 85H568ZM562.2 82.7L564 81V84.4ZM570.4 82.7L568.6 81V84.4Z" fill="#0A1A7A"/><path d="M573.5 92.5H569.5L573.5 88.5Z" fill="#000"/><path d="M580.5 91.5L585.5 86.5" stroke="#8A6410" stroke-width="3.2" stroke-linecap="round"/><path d="M580.5 91.5L585.5 86.5" stroke="#F4B030" stroke-width="1.8" stroke-linecap="round"/><circle cx="589.3" cy="82.7" r="5.6" fill="#fff" stroke="#4A4A4A" stroke-width="1.1"/><path d="M590 80.5Q593 81.5 591.5 85Q590 86.5 587.5 85.5" fill="none" stroke="#0A1A7A" stroke-width="1.5"/><path d="M590.5 78.5L587.5 80.8L590.8 82.8Z" fill="#0A1A7A"/><path d="M615.8 80Q619 76.3 622.3 80M615.8 81.3Q611.3 82.5 612.3 86.5Q613.5 89.5 617.5 89M622.3 81.3Q626.8 82 625.8 86.3Q625.3 88 623.5 89M615.3 88.3Q618.5 94 622.3 89.3" fill="none" stroke="#0A1478" stroke-width="2.1"/><path d="M619 80.3V88.2M614.6 84.9H623.8" stroke="#B4B4AC" stroke-width="2.3"/><path d="M627 89V92.8H623.2Z" fill="#000"/><path d="M634.0 85Q641.5 77 649.0 85Q641.5 93 634.0 85Z" fill="#fff" stroke="#303030" stroke-width="1"/><circle cx="641.5" cy="85" r="3.2" fill="#2E8A2E"/><circle cx="641.5" cy="85" r="1.2" fill="#000"/><rect x="661.5" y="82" width="6.5" height="6.5" fill="#A09AC8"/><path d="M659 90.5V80" stroke="#11AA11" stroke-width="1.4"/><path d="M659 77.5L657 81H661Z" fill="#11AA11"/><path d="M659 90.5H670" stroke="#F01010" stroke-width="1.4"/><path d="M673 90.5L669.5 88.5V92.5Z" fill="#F01010"/><circle cx="659" cy="90.5" r="1.5" fill="#1020E0"/><path d="M681.5 78V90.5L690 87.5V81Z" fill="none" stroke="#2A2A2A" stroke-width="1"/><path d="M684.5 79V89.5M687.2 80V88.5M681.5 82.2L690 82.5M681.5 86.3L690 85.8" stroke="#2A2A2A" stroke-width="0.9"/><path d="M684 90.5H696M686 92H696" stroke="#A0A0A0" stroke-width="0.8"/><defs><linearGradient id="cg" x1="0" y1="0" x2="1" y2="1"><stop offset="0" stop-color="#fff"/><stop offset="1" stop-color="#C8C8C8"/></linearGradient></defs><path d="M711 82L714 79H724.5V88.5L721.5 92H711Z" fill="url(#cg)" stroke="#22A022" stroke-width="1.1"/><path d="M711 82H721.5V92M721.5 82L724.5 79" fill="none" stroke="#22A022" stroke-width="1"/><rect x="734" y="77.5" width="16" height="15" fill="#3A48B8"/><rect x="736" y="78.5" width="12" height="13" fill="#fff"/><path d="M736 79.8H748M736 81.2H748" stroke="#9090C0" stroke-width="0.6"/><path d="M735.0 85.3Q742 77.8 749.0 85.3Q742 92.8 735.0 85.3Z" fill="#fff" stroke="#303030" stroke-width="1"/><circle cx="742" cy="85.3" r="3.2" fill="#2E8A2E"/><circle cx="742" cy="85.3" r="1.2" fill="#000"/><rect x="765.5" y="77.8" width="15" height="14.6" fill="#fff" stroke="#707070" stroke-width="1.6"/><path d="M772.5 78V92.5M766 85H772.5" stroke="#707070" stroke-width="1.6"/><path d="M790 77.8H798.5L801.5 80.8V92.5H790Z" fill="#fff" stroke="#707070" stroke-width="1.4"/><path d="M790 85.5H801.5M796 77.8V85.5" stroke="#707070" stroke-width="1.4"/><path d="M798 78L801.5 81.5H798Z" fill="#202020"/><rect x="819.5" y="79.5" width="7" height="7" fill="#B8D0EC" stroke="#4A5A78" stroke-width="0.9"/><circle cx="830.8" cy="87.3" r="4.1" fill="#F0F0F4" stroke="#4A5A78" stroke-width="0.9"/><path d="M842.5 80L845 77.5H851V84L848.5 86.5H842.5Z" fill="#8098B8" stroke="#3A4A68" stroke-width="0.9"/><path d="M842.5 80H848.5V86.5M848.5 80L851 77.5" fill="none" stroke="#3A4A68" stroke-width="0.8"/><path d="M849.5 82.5V90.5Q853.5 93.3 857.5 90.5V82.5" fill="#F4F4F4" stroke="#3A4A68" stroke-width="0.9"/><ellipse cx="853.5" cy="82.5" rx="4" ry="1.6" fill="#fff" stroke="#3A4A68" stroke-width="0.9"/><path d="M21 118L27 113.5L35.5 118.5L29.5 123Z" fill="#D8E0EC" stroke="#7A8698" stroke-width="0.8"/><path d="M21 115L27 110.5L35.5 115.5L29.5 120Z" fill="#E4EAF4" stroke="#7A8698" stroke-width="0.8"/><path d="M21 112.5L27 108.5L35 113L29.5 117Z" fill="#EEF2F8" stroke="#8A96A8" stroke-width="0.7"/><circle cx="27.3" cy="115.3" r="3.4" fill="#C6F0FA" stroke="#1E3C8A" stroke-width="1.1"/><path d="M29.8 118L35 122.8" stroke="#E09050" stroke-width="1.9"/><path d="M49.5 121Q47.5 118 47.5 115.5Q47.5 110.8 52 110.8Q56.5 110.8 56.5 115.5Q56.5 118 54.5 121Z" fill="#F6F21E" stroke="#000" stroke-width="1"/><rect x="49.5" y="121" width="5" height="2.5" fill="#000"/><path d="M69.5 111.5L71 115L74.5 113.5L73 117L76.5 118L73 119.5L74.5 123L71 121.5L69.5 124L68 121.5L64.5 123L66 119.5L62.5 118L66 117L64.5 113.5L68 115Z" fill="#F8E800"/><circle cx="69.5" cy="118" r="3.6" fill="#F8E800"/><path d="M80 119V114.5Q80 110.5 83.8 110.5Q87.5 110.5 87.5 114.5V118" fill="none" stroke="#5060B0" stroke-width="1.2"/><path d="M80 119V114.5Q80 110.5 83.8 110.5Q87.5 110.5 87.5 114.5V118" fill="none" stroke="#fff" stroke-width="0.4"/><rect x="84.5" y="118" width="10.5" height="5.5" fill="#F4E020" stroke="#A08A00" stroke-width="0.8"/><path d="M85 120.7H95" stroke="#B8A000" stroke-width="0.6"/><rect x="100" y="109.5" width="10" height="4" fill="#fff" stroke="#888" stroke-width="0.8"/><path d="M97.5 114.5Q97.5 113.0 99 113.0H111Q112.5 113.0 112.5 114.5V120.5H97.5Z" fill="#8A8A80" stroke="#5A5A50" stroke-width="0.8"/><rect x="98" y="113.5" width="14" height="3" fill="#EDEDED"/><rect x="110" y="117.0" width="2" height="1.5" fill="#11CC33"/><rect x="100" y="119.5" width="10" height="5" fill="#fff" stroke="#888" stroke-width="0.8"/><rect x="117" y="110" width="11.8" height="11.6" fill="#000"/><path d="M346 117.5L352.5 121L359.5 117.5L352.5 114Z" fill="#F6EE80" stroke="#A09A40" stroke-width="0.8"/><path d="M346 114.5L352.5 118L359.5 114.5L352.5 111Z" fill="#B0BCC8" stroke="#6A7A88" stroke-width="0.8"/><path d="M346 112.5L352.5 116L359.5 112.5L352.5 109Z" fill="#D0D8E0" stroke="#6A7A88" stroke-width="0.8"/><circle cx="348.5" cy="122" r="1.2" fill="#4A80E0"/><path d="M818 122.5L829.5 111.3" stroke="#404040" stroke-width="1"/><circle cx="829.3" cy="119.6" r="2" fill="#fff" stroke="#555" stroke-width="0.7"/><circle cx="825.5" cy="115.2" r="2.7" fill="#F00000"/><path d="M843.5 121L854 110.8" stroke="#404040" stroke-width="1"/><circle cx="843.7" cy="121" r="2.4" fill="#F00000"/><circle cx="854" cy="110.8" r="2.4" fill="#F00000"/><path d="M863.5 123L878 109" stroke="#404040" stroke-width="1"/><circle cx="870.8" cy="116.2" r="2.6" fill="#F00000"/><circle cx="894.8" cy="116.2" r="6.9" fill="none" stroke="#505050" stroke-width="1.2"/><circle cx="894.8" cy="116.2" r="2" fill="#F00000"/><path d="M917 109V119M910.5 119H924" stroke="#404040" stroke-width="1.1"/><circle cx="917" cy="119" r="2.6" fill="#F00000"/><path d="M933 119L943 109M937 123L947.2 112.8" stroke="#404040" stroke-width="1.2"/><circle cx="963.2" cy="116.5" r="6.3" fill="none" stroke="#404040" stroke-width="1"/><circle cx="959.5" cy="112.8" r="2.6" fill="#F00000"/><path d="M985.9 110.5L991.6 116.2L985.9 121.9L980.2 116.2Z" fill="none" stroke="#404040" stroke-width="0.9"/><circle cx="985.9" cy="110.5" r="2.3" fill="#F00000"/><circle cx="991.6" cy="116.2" r="2.3" fill="#F00000"/><circle cx="985.9" cy="121.9" r="2.3" fill="#F00000"/><circle cx="980.2" cy="116.2" r="2.3" fill="#F00000"/><rect x="1004" y="109.4" width="8.5" height="7.5" fill="#FBF8D8" stroke="#8A8A70" stroke-width="0.7"/><circle cx="1012" cy="117.6" r="4.2" fill="#FBF8D0" stroke="#8A8A70" stroke-width="0.7"/><circle cx="1004.3" cy="117.4" r="2.6" fill="#F00000"/><path d="M12 163L24 150.8" stroke="#1B6B1B" stroke-width="1.2"/><circle cx="12" cy="163" r="2.1" fill="#FFF200" stroke="#6E6A00" stroke-width="0.8"/><circle cx="24" cy="151" r="2.1" fill="#FFF200" stroke="#6E6A00" stroke-width="0.8"/><path d="M26.2 165.2H22.2L26.2 161.2Z" fill="#000"/><path d="M12 184.5V177.7A6 5.5 0 0 1 24 177.7" fill="none" stroke="#1B6B1B" stroke-width="1.4"/><circle cx="12" cy="177.7" r="2.1" fill="#FFF200" stroke="#6E6A00" stroke-width="0.8"/><circle cx="24" cy="177.7" r="2.1" fill="#FFF200" stroke="#6E6A00" stroke-width="0.8"/><circle cx="12" cy="184.5" r="2.1" fill="#FFF200" stroke="#6E6A00" stroke-width="0.8"/><path d="M26.2 186.8H22.2L26.2 182.8Z" fill="#000"/><rect x="12" y="196" width="12" height="8" fill="#F0F0F0" stroke="#1B6B1B" stroke-width="1.3"/><circle cx="24" cy="196" r="2.1" fill="#FFF200" stroke="#6E6A00" stroke-width="0.8"/><circle cx="12" cy="204" r="2.1" fill="#FFF200" stroke="#6E6A00" stroke-width="0.8"/><path d="M26.2 208.8H22.2L26.2 204.8Z" fill="#000"/><path d="M16.5 236Q10.5 233 12 228Q14 223.5 18.5 224Q22.5 224.5 23.5 229.5" fill="none" stroke="#1B6B1B" stroke-width="1.3"/><circle cx="11.8" cy="226.8" r="2.1" fill="#FFF200" stroke="#6E6A00" stroke-width="0.8"/><circle cx="23.7" cy="230.8" r="1.8" fill="#fff" stroke="#555" stroke-width="0.7"/><circle cx="16.9" cy="236" r="2.1" fill="#FFF200" stroke="#6E6A00" stroke-width="0.8"/><circle cx="17.7" cy="252.6" r="7.3" fill="#fff" stroke="#1B6B1B" stroke-width="1.4"/><circle cx="17.5" cy="252.5" r="2.2" fill="#FFF200" stroke="#6E6A00" stroke-width="0.8"/><circle cx="24.2" cy="252.5" r="1.9" fill="#FFF200" stroke="#6E6A00" stroke-width="0.8"/><circle cx="17.7" cy="274.8" r="7.3" fill="#fff" stroke="#1B6B1B" stroke-width="1.5"/><circle cx="17.7" cy="274.8" r="3.4" fill="#fff" stroke="#1B6B1B" stroke-width="1.5"/><path d="M11.7 302.9Q11 296 17 293.5Q21 292 23 291.8" fill="none" stroke="#1B6B1B" stroke-width="1.3"/><path d="M11.7 302.9Q17 303 19.5 298" fill="none" stroke="#1B6B1B" stroke-width="1.3"/><path d="M14.3 293.5L19.5 298" stroke="#909090" stroke-width="0.6"/><circle cx="14.3" cy="293.6" r="1.7" fill="#fff" stroke="#555" stroke-width="0.7"/><circle cx="22.9" cy="291.8" r="2.1" fill="#FFF200" stroke="#6E6A00" stroke-width="0.8"/><rect x="9.8" y="301" width="3.8" height="3.8" fill="#FFF200" stroke="#6E6A00" stroke-width="0.8"/><path d="M11.7 324.4Q10.5 315 22.9 313.2Q24.5 323 11.7 324.4Z" fill="#fff" stroke="#1B6B1B" stroke-width="1.3"/><path d="M11.7 324.4L22.9 313.2" stroke="#909090" stroke-width="0.6"/><circle cx="14.3" cy="315.4" r="1.7" fill="#fff" stroke="#555" stroke-width="0.7"/><circle cx="22.9" cy="313.2" r="2.1" fill="#FFF200" stroke="#6E6A00" stroke-width="0.8"/><rect x="9.8" y="322.5" width="3.8" height="3.8" fill="#FFF200" stroke="#6E6A00" stroke-width="0.8"/><path d="M17.3 344.5L20.5 347.8L17.3 351L14 347.8Z" fill="#FFF200" stroke="#8A8400" stroke-width="0.6"/><path d="M17.3 344V351.5M13.8 347.8H20.8" stroke="#1B6B1B" stroke-width="0.9"/><defs><pattern id="hp" width="3" height="3" patternUnits="userSpaceOnUse" patternTransform="rotate(45)"><rect width="3" height="3" fill="#fff"/><rect width="1.5" height="3" fill="#1B6B1B"/></pattern><linearGradient id="gg" x1="0" y1="0" x2="1" y2="0.3"><stop offset="0.2" stop-color="#0A1070"/><stop offset="1" stop-color="#F0F0FF"/></linearGradient><linearGradient id="wg" x1="0" y1="0" x2="1" y2="1"><stop offset="0" stop-color="#fff"/><stop offset="1" stop-color="#C0C0C0"/></linearGradient><radialGradient id="bg2" cx="0.35" cy="0.35" r="0.7"><stop offset="0" stop-color="#A8E0A8"/><stop offset="1" stop-color="#1E8A1E"/></radialGradient><pattern id="dh" width="2.5" height="2.5" patternUnits="userSpaceOnUse" patternTransform="rotate(45)"><rect width="2.5" height="2.5" fill="#E8E8E8"/><rect width="1" height="2.5" fill="#303030"/></pattern></defs><circle cx="18.5" cy="379.8" r="6.7" fill="none" stroke="#B8B4AC" stroke-width="0.7" stroke-dasharray="1.2 1"/><rect x="10.3" y="378.3" width="11.6" height="8.3" fill="none" stroke="#B0ACA4" stroke-width="0.7"/><path d="M12.3 375.3H22V384.8H19.5Q12.5 384.8 12.3 377.8Z" fill="url(#hp)" stroke="#1B6B1B" stroke-width="1.2"/><circle cx="18.5" cy="401.8" r="6.7" fill="none" stroke="#B8B4AC" stroke-width="0.7" stroke-dasharray="1.2 1"/><rect x="10.3" y="400.3" width="11.6" height="8.3" fill="none" stroke="#B0ACA4" stroke-width="0.7"/><path d="M12.3 397.3H22V406.8H19.5Q12.5 406.8 12.3 399.8Z" fill="url(#gg)" stroke="#1B6B1B" stroke-width="1.2"/><circle cx="18.5" cy="423.8" r="6.7" fill="none" stroke="#B8B4AC" stroke-width="0.7" stroke-dasharray="1.2 1"/><rect x="10.3" y="422.3" width="11.6" height="8.3" fill="none" stroke="#B0ACA4" stroke-width="0.7"/><path d="M12.3 419.3H22V428.8H19.5Q12.5 428.8 12.3 421.8Z" fill="url(#wg)" stroke="#1B6B1B" stroke-width="1.2"/><path d="M19.7 443.1A4.7 4.7 0 1 0 15.1 448.4L15.3 452.6H20.8L25.5 443.5Z" fill="url(#bg2)" stroke="#0E5A0E" stroke-width="0.9"/><rect x="10" y="459" width="15.5" height="15.5" fill="url(#dh)"/><path d="M13 462H23V472H18V467H13Z" fill="#fff" stroke="#505050" stroke-width="1"/><path d="M12.8 486.3A3.2 3.2 0 0 1 18 484A3.3 3.3 0 0 1 23.8 485.8A3.2 3.2 0 0 1 24.6 491.6A3.4 3.4 0 0 1 19 495.2A3.3 3.3 0 0 1 12.8 494A3.2 3.2 0 0 1 11 488.8A2.4 2.4 0 0 1 12.8 486.3Z" fill="url(#wg)" stroke="#1B6B1B" stroke-width="1.2"/><rect x="10.5" y="512" width="15" height="14.3" fill="#fff" stroke="#1B6B1B" stroke-width="1.3"/><rect x="10.5" y="512" width="15" height="2.5" fill="#1B6B1B"/><path d="M10.5 518.3H25.5M10.5 522.3H25.5M15.5 514V526M20.5 514V526" stroke="#1B6B1B" stroke-width="1.2"/><path fill-rule="evenodd" d="M14.6 554.6L18.3 540.6H21L24.6 554.6H22.2L21.3 551.2H18L17.1 554.6ZM18.5 549H20.8L19.65 544.2Z" fill="#1B6B1B"/><circle cx="13.2" cy="554.6" r="1.8" fill="#FFF200" stroke="#6E6A00" stroke-width="0.8"/><path fill-rule="evenodd" d="M13.3 574.4L16.2 563.2H18.3L21.2 574.4H19.4L18.7 571.6H15.8L15.1 574.4ZM16.3 569.9H18.2L17.25 566Z" fill="#1B6B1B"/><path d="M21 574H25.9M12.3 576.5H25.9M12.3 578.5H25.9" stroke="#1B6B1B" stroke-width="0.9"/><circle cx="11.8" cy="574" r="1.7" fill="#FFF200" stroke="#6E6A00" stroke-width="0.8"/><defs><linearGradient id="tg" x1="0" y1="0" x2="1" y2="1"><stop offset="0" stop-color="#F4E4B8"/><stop offset="1" stop-color="#A89050"/></linearGradient></defs><rect x="10.5" y="606.5" width="6" height="6" fill="url(#tg)" stroke="#0E520E" stroke-width="1.2"/><rect x="19.5" y="606.5" width="6" height="6" fill="url(#tg)" stroke="#0E520E" stroke-width="1.2"/><rect x="10.5" y="615.5" width="6" height="6" fill="url(#tg)" stroke="#0E520E" stroke-width="1.2"/><rect x="14" y="610" width="8" height="7.5" fill="#fff" stroke="#0E520E" stroke-width="1.2"/><path d="M10.5 638.6V636.5H16.5V638.6Z" fill="#fff"/><path d="M10.5 638.6V636.5H16.5V638.6" fill="none" stroke="#0E520E" stroke-width="1.2"/><path d="M696 156.9H710M702.9 149.8V164" stroke="#14287A" stroke-width="2.2"/><path d="M695 156.9L698.5 153.8V160ZM711 156.9L707.5 153.8V160ZM702.9 149L699.8 152.5H706ZM702.9 165L699.8 161.5H706Z" fill="#14287A"/><rect x="696.5" y="172" width="4.5" height="4.5" fill="#fff" stroke="#1B6B1B" stroke-width="1.2"/><rect x="703.5" y="178.5" width="5" height="5" fill="#fff" stroke="#1B6B1B" stroke-width="1.2"/><rect x="706" y="181" width="5" height="5" fill="#fff" stroke="#1B6B1B" stroke-width="1.2"/><path d="M703 173H708V176" fill="none" stroke="#14287A" stroke-width="1"/><path d="M706 175.5H710L708 178Z" fill="#14287A"/><path d="M698.5 208V198Q698.5 193.5 703 193.5Q707.5 193.5 707.5 198V201" fill="none" stroke="#1B6B1B" stroke-width="1.2"/><path d="M700.8 208V198.5Q700.8 196 703 196Q705.2 196 705.2 198.5V201" fill="none" stroke="#909090" stroke-width="0.9"/><path d="M698 208H702" stroke="#1B6B1B" stroke-width="1.2"/><rect x="695.5" y="218" width="15" height="10" fill="none" stroke="#A8A8A0" stroke-width="0.8"/><rect x="696" y="220.5" width="9.5" height="7.5" fill="#fff" stroke="#1B6B1B" stroke-width="1.3"/><path d="M703.5 246.3A6.4 6.4 0 1 0 709.4 251" fill="none" stroke="#14287A" stroke-width="1.9"/><path d="M705 243.5L711.5 245.5L709.5 251.5Z" fill="#14287A"/><circle cx="703" cy="252.8" r="0.6" fill="#555"/><path d="M703.2 267V283" stroke="#B0A898" stroke-width="0.8"/><path d="M704 270.8Q697 270.5 696.8 275Q697 279.5 703.5 279.5Q709 279.3 709.5 276.5" fill="none" stroke="#14287A" stroke-width="1.9"/><path d="M706 276.5L711.5 272.5L711.5 279.5Z" fill="#14287A"/><path d="M703.2 297V312" stroke="#B8B0A0" stroke-width="0.8"/><path d="M701.5 300V309.5H696Z" fill="#fff" stroke="#1B6B1B" stroke-width="1.2"/><path d="M705 300V309.5H710.5Z" fill="#fff" stroke="#1B6B1B" stroke-width="1.2"/><path d="M696 330L701 320.5L703 330Z" fill="url(#hp)" stroke="#1B6B1B" stroke-width="1.1"/><path d="M701 321L710 331L705 333Z" fill="url(#hp)" stroke="#1B6B1B" stroke-width="1.1"/><path d="M698 334L709 323" stroke="#C0A070" stroke-width="0.6"/><rect x="695.8" y="349.5" width="5" height="5" fill="#E8E8E0" stroke="#1B6B1B" stroke-width="1.4"/><rect x="704.8" y="349.5" width="5" height="5" fill="#E8E8E0" stroke="#1B6B1B" stroke-width="1.4"/><rect x="695.8" y="358.5" width="5" height="5" fill="#E8E8E0" stroke="#1B6B1B" stroke-width="1.4"/><rect x="704.8" y="358.5" width="5" height="5" fill="#E8E8E0" stroke="#1B6B1B" stroke-width="1.4"/><circle cx="708.40" cy="378.50" r="1.9" fill="#fff" stroke="#1B6B1B" stroke-width="1"/><circle cx="707.41" cy="381.56" r="1.9" fill="#fff" stroke="#1B6B1B" stroke-width="1"/><circle cx="704.81" cy="383.45" r="1.9" fill="#fff" stroke="#1B6B1B" stroke-width="1"/><circle cx="701.59" cy="383.45" r="1.9" fill="#fff" stroke="#1B6B1B" stroke-width="1"/><circle cx="698.99" cy="381.56" r="1.9" fill="#fff" stroke="#1B6B1B" stroke-width="1"/><circle cx="698.00" cy="378.50" r="1.9" fill="#fff" stroke="#1B6B1B" stroke-width="1"/><circle cx="698.99" cy="375.44" r="1.9" fill="#fff" stroke="#1B6B1B" stroke-width="1"/><circle cx="701.59" cy="373.55" r="1.9" fill="#fff" stroke="#1B6B1B" stroke-width="1"/><circle cx="704.81" cy="373.55" r="1.9" fill="#fff" stroke="#1B6B1B" stroke-width="1"/><circle cx="707.41" cy="375.44" r="1.9" fill="#fff" stroke="#1B6B1B" stroke-width="1"/><circle cx="703.2" cy="378.5" r="2.2" fill="#fff" stroke="#1B6B1B" stroke-width="1"/><path d="M698 411Q695 404 700 401.5Q705 400.5 707 405" fill="none" stroke="#C8B890" stroke-width="0.8" stroke-dasharray="1 1"/><rect x="702.8" y="408" width="4.5" height="6.5" fill="#fff" stroke="#1B6B1B" stroke-width="1.1"/><rect x="707.5" y="411" width="3.3" height="3.5" fill="#fff" stroke="#1B6B1B" stroke-width="1.1"/><path d="M701 415.5H711" stroke="#A8A090" stroke-width="0.7"/><rect x="700" y="434.5" width="10.5" height="8" fill="none" stroke="#A8A8A0" stroke-width="0.8"/><rect x="695.5" y="434.5" width="10" height="8.5" fill="none" stroke="#1B6B1B" stroke-width="1.4"/><path d="M704 447L708.5 431" stroke="#606060" stroke-width="0.8"/><path d="M695 460.6H703.7" stroke="#1B6B1B" stroke-width="1.6"/><path d="M705.4 468.3L710.6 453.7" stroke="#707070" stroke-width="0.8"/><path d="M699.5 478.5H695.8V487H709V478.5H705.5" fill="none" stroke="#1B6B1B" stroke-width="1.5"/><path d="M699.5 477V481M705.5 477V481" stroke="#303030" stroke-width="0.9"/><rect x="695.8" y="500.5" width="13.2" height="7.8" fill="none" stroke="#1B6B1B" stroke-width="1.5"/><path d="M700 500.5H705" stroke="#D8D4CC" stroke-width="1.8"/><path d="M695 526.6H703.7" stroke="#1B6B1B" stroke-width="1.6"/><circle cx="710.2" cy="526.6" r="1" fill="#000"/><path d="M695.8 543.5H707L710.5 555.5H695.8Z" fill="url(#wg)" stroke="#1B6B1B" stroke-width="1.4"/><rect x="697" y="573" width="11" height="14" fill="none" stroke="#C8C4BC" stroke-width="0.7" stroke-dasharray="1 1"/><path d="M697.2 585V581L704.4 573.6H708.6" fill="none" stroke="#1B6B1B" stroke-width="1.5"/><path d="M697.2 607V601Q697.2 595.5 703 595.5H708.6" fill="none" stroke="#1B6B1B" stroke-width="1.5"/><path d="M696 635.5L711 624" stroke="#303030" stroke-width="0.9"/><path d="M697 631L700.5 628.5L699 626.5L707 620.5L708.5 622.5L711.5 620" fill="none" stroke="#707070" stroke-width="0.7"/><circle cx="697" cy="635" r="1.1" fill="#000"/><circle cx="702" cy="631" r="1.1" fill="#000"/><circle cx="707" cy="627.5" r="1.1" fill="#000"/><path d="M985.5 165.3H998.7L993.6 170.4V174.3H990.2V170.4Z" fill="#fff" stroke="#202020" stroke-width="0.9"/><path d="M986 165.4H998" stroke="#8090B0" stroke-width="1"/><path d="M986.3 158.8H992.5L989.6 162.6H992.4L984.2 169.4L986.9 163.9H984.6Z" fill="#F8D800" stroke="#D0A000" stroke-width="0.4"/><path d="M39.5 527.5V536.5" stroke="#000" stroke-width="1.6"/><path d="M47 527.5V536.5L41 532Z" fill="#000"/><path d="M62 527.5V536.5L56 532Z" fill="#000"/><path d="M75 527.5V536.5L81 532Z" fill="#000"/><path d="M91 527.5V536.5L97 532Z" fill="#000"/><path d="M98.5 527.5V536.5" stroke="#000" stroke-width="1.6"/><path d="M168 524.5H222L229 540.5H169Z" fill="#D5D5CD"/><path d="M222 524.5H288L280.5 540.5H229Z" fill="#D5D5CD"/><path d="M288 524.5H687V541H280.5Z" fill="#D5D5CD"/><path d="M168 524.5H687M164.5 531L169 540.5H220.5L224.8 531M222 524.5L229 540.5H280.5L288 524.5" fill="none" stroke="#000" stroke-width="1"/><path d="M103 524L111 540.5H160L168 524Z" fill="#fff"/><path d="M103 524L111 540.5M160 540.5L168 524" fill="none" stroke="#000" stroke-width="1.1"/><path d="M111 540.5H160" stroke="#808080" stroke-width="1"/></svg>
<div style="left:112.785px;top:527.69px;font:bold 11px/11px 'Liberation Sans';color:#000;white-space:pre;will-change:transform;letter-spacing:0.429px;">Modello</div>
<div style="left:173.12px;top:527.69px;font:normal 11px/11px 'Liberation Sans';color:#000;white-space:pre;will-change:transform;letter-spacing:0.119px;">Layout1</div>
<div style="left:233.72px;top:527.69px;font:normal 11px/11px 'Liberation Sans';color:#000;white-space:pre;will-change:transform;letter-spacing:0.069px;">Layout2</div>
</body></html>
